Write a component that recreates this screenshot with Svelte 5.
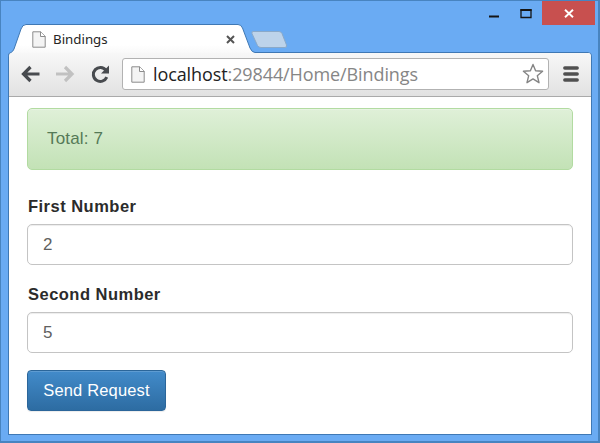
<script>
  let first = $state('2');
  let second = $state('5');
  let total = $state(7);
  function send() {
    total = Number(first) + Number(second);
  }
</script>

{#snippet page()}
  <svg class="page" width="14" height="17" viewBox="0 0 14 17">
    <path d="M.8.8h8l4.4 4.4v11H.8z" fill="#f4f4f4" stroke="#8c8c8c" />
    <path d="M8.5.8v4.7h4.7" fill="#fff" stroke="#8c8c8c" />
  </svg>
{/snippet}

<div class="window">
  <header class="titlebar">
    <svg class="shape" width="600" height="56" viewBox="0 0 600 56">
      <defs>
        <linearGradient id="tabfill" x1="0" y1="0" x2="0" y2="1">
          <stop offset="0" stop-color="#fff" /><stop offset=".65" stop-color="#fff" /><stop offset="1" stop-color="#f6f6f6" />
        </linearGradient>
      </defs>
      <path d="M8.5 56V55Q8.5 53 11 52.5Q13 51.500 14 49L21 29Q22.500 24.500 26 24.500H238Q241 24.500 242.500 28L250 48Q252 52.500 255 52.500H588Q591.500 52.500 591.500 56" fill="url(#tabfill)" stroke="#3f78b4" />
      <path d="M253 31.500H279Q281 31.500 282 33.500L286.500 45Q287 47.500 285 47.500H261Q258.500 47.500 257.500 45.500L252 33.500Q251.500 31.500 253 31.500z" fill="#bdd3ea" stroke="#8aa9c9" />
    </svg>
    <div class="tab">
      {@render page()}
      <span class="title">Bindings</span>
      <svg class="close" width="9" height="9" viewBox="0 0 9 9"><path d="M1 1l7 7M8 1L1 8" stroke="#555" stroke-width="2" /></svg>
    </div>
    <div class="controls">
      <svg width="53" height="25" viewBox="0 0 53 25">
        <path d="M0 15.500h10" stroke="#151515" stroke-width="2" />
        <path d="M32 9h10v7.500H32z" fill="none" stroke="#151515" stroke-width="1.300" /><path d="M31.400 9h11.200" stroke="#151515" stroke-width="2" />
      </svg>
      <div class="exit">
        <svg width="10" height="9" viewBox="0 0 10 9"><path d="M1 .7l8 7.600M9 .7L1 8.300" stroke="#fff" stroke-width="1.900" /></svg>
      </div>
    </div>
  </header>

  <div class="frame">
    <nav class="toolbar">
      <svg class="nav" width="103" height="24" viewBox="0 0 103 24">
        <path d="M30.500 12H15M21.500 5L14.500 12l7 7" fill="none" stroke="#484b4f" stroke-width="3.200" />
        <path d="M47 12h15M56 5L63 12l-7 7" fill="none" stroke="#c1c1c1" stroke-width="3.200" />
        <path d="M97 8.300A7 7 0 1 0 97.800 15.200" fill="none" stroke="#484b4f" stroke-width="3" />
        <path d="M100 3.500v8h-8z" fill="#484b4f" />
      </svg>
      <div class="address">
        {@render page()}
        <span class="url"><b>localhost</b>:29844/Home/Bindings</span>
        <svg class="star" width="22" height="22" viewBox="0 0 22 22"><path d="M11 1.500l2.600 6.300 7 .5-5.300 4.400 1.700 7-6-3.800-6 3.800 1.700-7L1.400 8.300l7-.5z" fill="#fff" stroke="#858585" stroke-width="1.400" stroke-linejoin="round" /></svg>
      </div>
      <svg class="menu" width="16" height="16" viewBox="0 0 16 16"><path d="M1.800 2h12.400M1.800 8h12.400M1.800 14h12.400" stroke="#505050" stroke-width="3.400" stroke-linecap="round" /></svg>
    </nav>
    <main>
      <div class="alert">Total: {total}</div>
      <label for="first">First Number</label>
      <input id="first" type="text" bind:value={first} />
      <label for="second">Second Number</label>
      <input id="second" type="text" bind:value={second} />
      <button onclick={send}>Send Request</button>
    </main>
  </div>
</div>

<style>
  .window {
    box-sizing: border-box; width: 600px; height: 443px; position: relative;
    display: flex; flex-direction: column; background: #6aabf3;
    border: solid #4884c0; border-width: 1px 2px 2px 1px;
    font-family: "Liberation Sans", Arial, sans-serif; overflow: hidden;
  }
  svg { display: block; flex: none; }
  .titlebar { height: 52px; flex: none; display: flex; justify-content: space-between; align-items: flex-start; }
  .shape { position: absolute; left: -1px; top: -1px; }
  .tab { position: relative; display: flex; align-items: center; width: 203px; margin: 29px 0 0 31px; height: 18px; }
  .title { font: 13.3px "Noto Sans", "Open Sans", sans-serif; color: #252525; margin-left: 7px; }
  .close { margin-left: auto; }
  .controls { position: relative; display: flex; margin-right: 3px; }
  .exit { width: 53px; height: 24px; background: #c8504f; display: flex; align-items: center; justify-content: center; }
  .frame { position: relative; margin: 0 6px 6px 7px; border: 1px solid #3f78b4; border-top: 0; flex: 1; display: flex; flex-direction: column; background: #fff; border-radius: 4px 4px 0 0; overflow: hidden; }
  .toolbar { box-sizing: border-box; height: 44px; flex: none; display: flex; align-items: center; padding: 0 0 1px 6px; border-bottom: 1px solid #aaa; background: linear-gradient(#f7f7f7, #e2e2e2); }
  .nav { margin-left: -6px; }
  .address { box-sizing: border-box; height: 32px; width: 427px; margin-left: 10px; border: 1px solid #b2b2b2; border-radius: 3px; background: #fff; display: flex; align-items: center; padding: 0 4px 0 8px; }
  .url { font: 18px "Open Sans", "Noto Sans", sans-serif; letter-spacing: -.1px; color: #868686; margin-left: 8px; white-space: nowrap; }
  .url b { font-weight: 400; color: #222; }
  .star { margin-left: auto; }
  .menu { margin-left: 14px; }
  main { padding: 11px 18px 0; display: flex; flex-direction: column; align-items: stretch; }
  .alert { box-sizing: border-box; height: 62px; padding: 0 19px; display: flex; align-items: center; border: 1px solid #b2dba1; border-radius: 5px; background: linear-gradient(#dff0d8, #c3e2b6); color: #557a57; font-size: 17px; letter-spacing: .15px; margin-bottom: 25px; box-shadow: inset 0 1px 0 #ffffff40; }
  label { font-weight: 700; font-size: 16.5px; letter-spacing: .48px; line-height: 22px; color: #2b2b2b; margin: 0 0 7px 1px; }
  input { box-sizing: border-box; height: 41px; width: 100%; margin: 0 0 18px; border: 1px solid #c4c4c4; border-radius: 5px; padding: 0 15px; font: 17px "Liberation Sans", Arial, sans-serif; color: #606060; background: #fff; box-shadow: inset 0 1px 1px #00000013; outline: 0; }
  input + button { margin-top: -1px; }
  button { box-sizing: border-box; width: 139px; height: 41px; border: 1px solid #2b669a; border-radius: 4px; background: linear-gradient(#428bca, #2d6ca2); color: #fff; font: 16.5px "Liberation Sans", Arial, sans-serif; letter-spacing: .15px; padding: 0; white-space: nowrap; box-shadow: inset 0 1px 0 #ffffff26, 0 1px 1px #00000013; }
</style>
